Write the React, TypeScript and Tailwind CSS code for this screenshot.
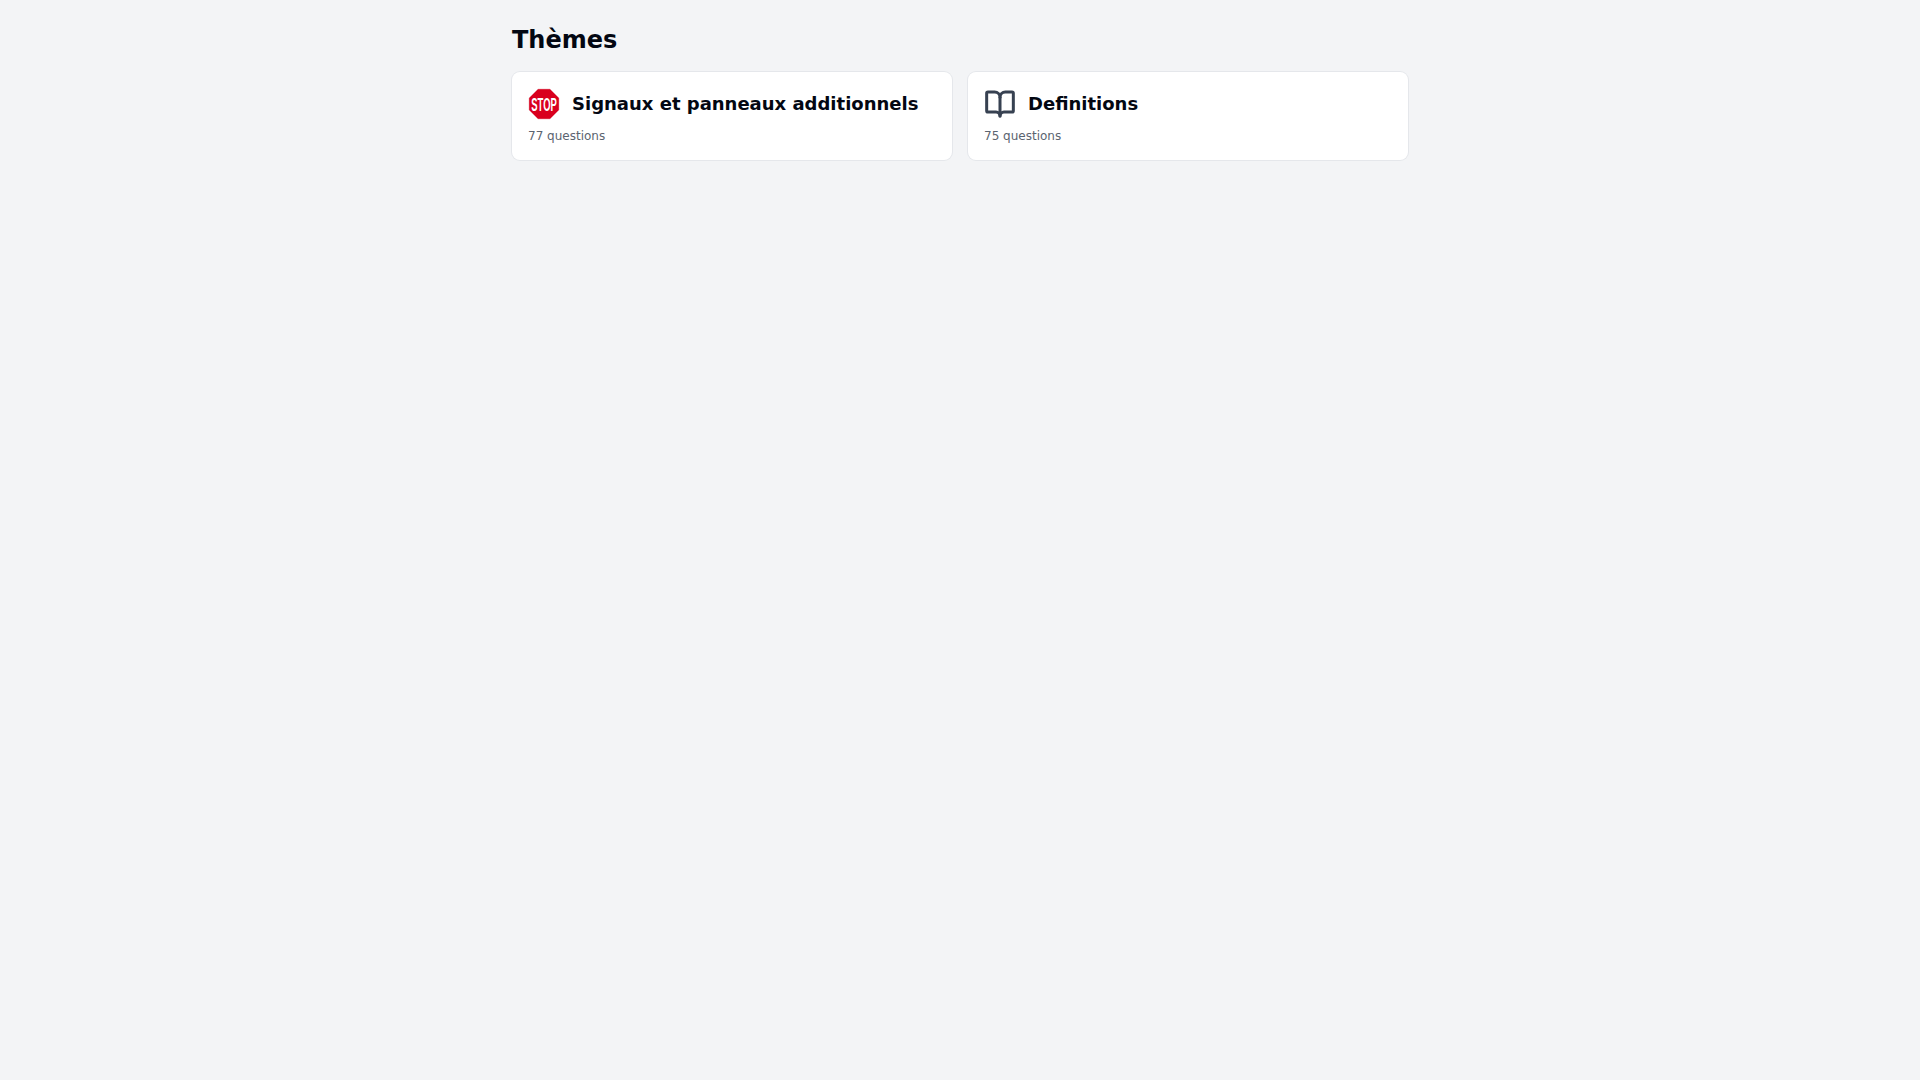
import React from 'react';
import { BookOpen } from 'lucide-react';

const StopSign = () => (
  <svg viewBox="0 0 32 32" className="w-8 h-8 shrink-0">
    <polygon points="10,1 22,1 31,10 31,22 22,31 10,31 1,22 1,10" fill="#d9001e" stroke="#e8a0aa" strokeWidth="0.5" />
    <text
      x="16"
      y="22.5"
      textAnchor="middle"
      fill="#fff"
      fontSize="18"
      fontWeight="700"
      fontFamily="'Liberation Sans', sans-serif"
      textLength="25.5"
      lengthAdjust="spacingAndGlyphs"
    >
      STOP
    </text>
  </svg>
);

const themes = [
  { title: 'Signaux et panneaux additionnels', count: 77, icon: <StopSign /> },
  { title: 'Definitions', count: 75, icon: <BookOpen strokeWidth={2.25} className="w-8 h-8 shrink-0 text-[#374151]" /> },
];

const App = () => {
  return (
    <div className="min-h-screen bg-[#f3f4f6] font-['DejaVu_Sans',sans-serif]">
      <main className="max-w-4xl mx-auto py-6">
        <h1 className="text-2xl font-bold text-[#030712] mb-4">Thèmes</h1>
        <div className="grid grid-cols-2 gap-4">
          {themes.map((theme) => (
            <div key={theme.title} className="bg-white rounded-lg ring-1 ring-[#e5e7eb] p-4">
              <div className="flex items-center gap-3 mb-2">
                {theme.icon}
                <h2 className="text-lg font-bold text-[#030712]">{theme.title}</h2>
              </div>
              <p className="text-xs text-[#5b6470]">{theme.count} questions</p>
            </div>
          ))}
        </div>
      </main>
    </div>
  );
};

export default App;
